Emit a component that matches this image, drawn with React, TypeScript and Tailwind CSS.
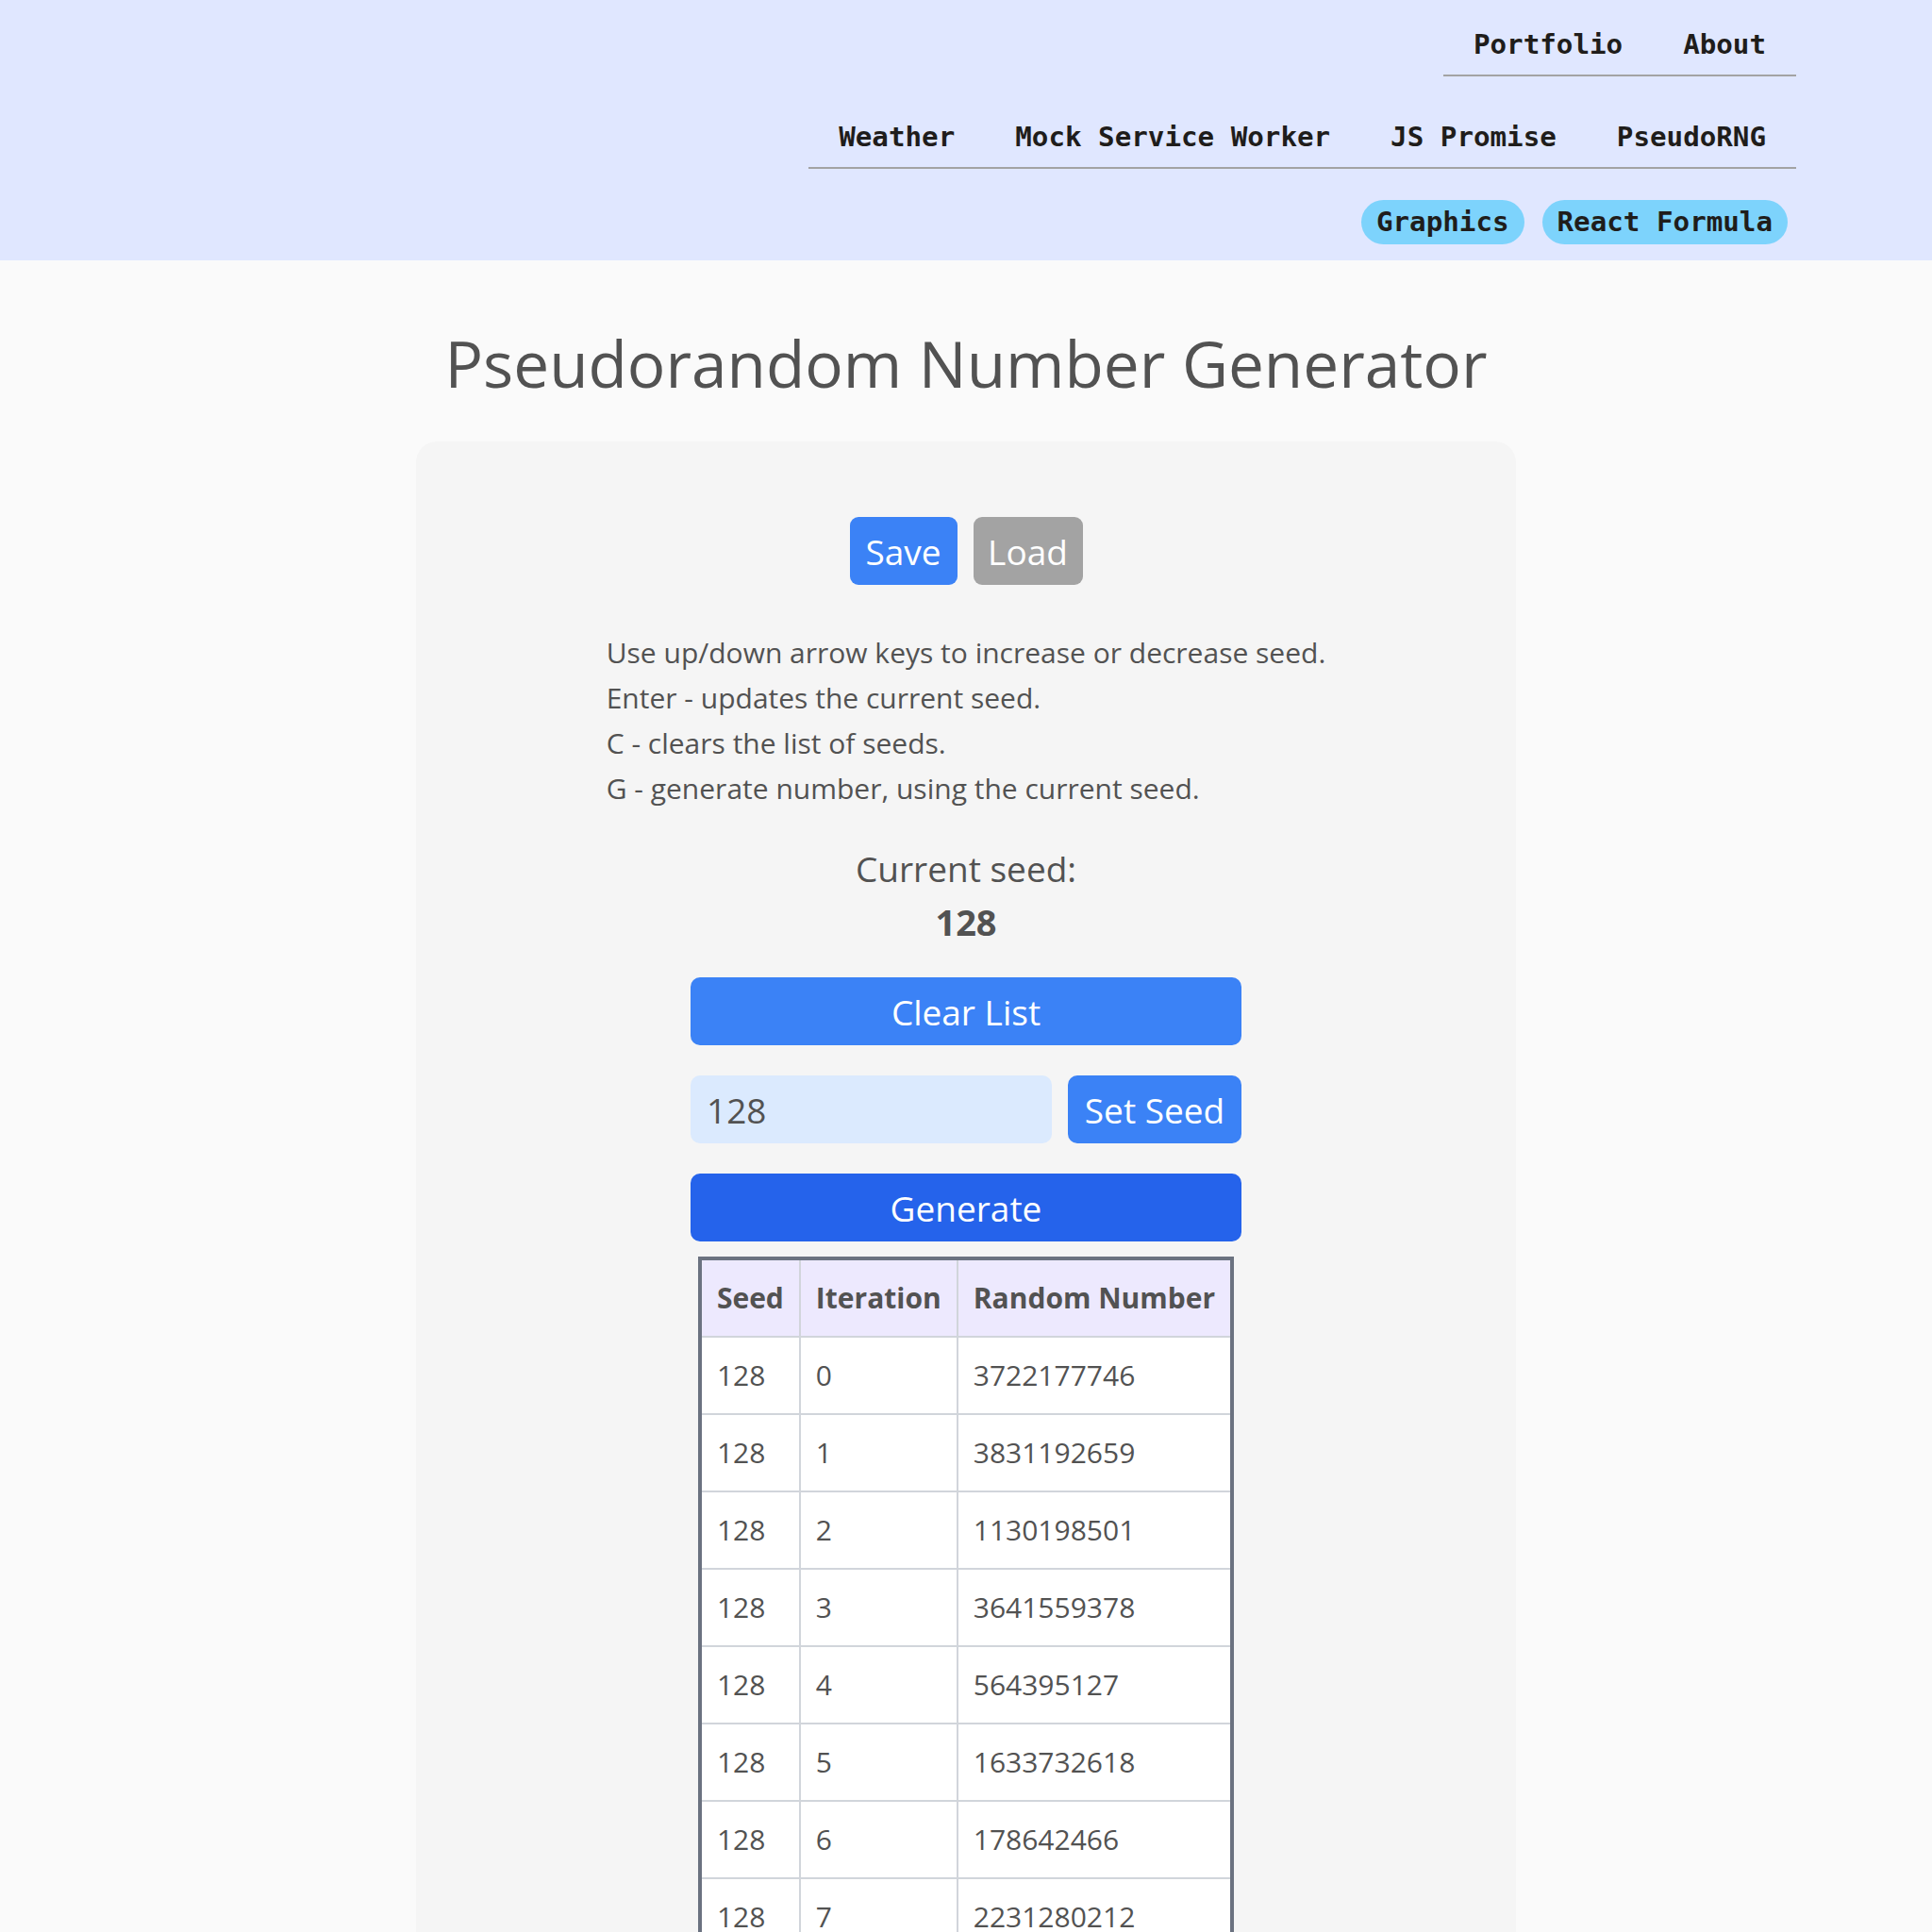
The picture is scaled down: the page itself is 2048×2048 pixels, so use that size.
import React from "react";

const rows: [number, number, string][] = [
  [128, 0, "3722177746"],
  [128, 1, "3831192659"],
  [128, 2, "1130198501"],
  [128, 3, "3641559378"],
  [128, 4, "564395127"],
  [128, 5, "1633732618"],
  [128, 6, "178642466"],
  [128, 7, "2231280212"],
];

const mono = { fontFamily: '"DejaVu Sans Mono", "Liberation Mono", monospace' };

function NavRow({ items, className }: { items: string[]; className?: string }) {
  return (
    <ul className={"flex border-b-2 border-[#a3a3a3] " + (className ?? "")}>
      {items.map((t) => (
        <li key={t}>
          <a className="block px-[32px] py-[10px] text-[29.2px] leading-[44px] font-bold text-[#1f1d1b]" style={mono}>
            {t}
          </a>
        </li>
      ))}
    </ul>
  );
}

export default function App() {
  return (
    <div
      className="min-h-screen bg-[#fafafa] text-[#525252]"
      style={{ fontFamily: '"Open Sans", "Noto Sans", sans-serif' }}
    >
      <header className="h-[276px] bg-[#e0e7ff] flex flex-col items-end pr-[144px]">
        <NavRow items={["Portfolio", "About"]} className="mt-[15px]" />
        <NavRow items={["Weather", "Mock Service Worker", "JS Promise", "PseudoRNG"]} className="mt-[32px]" />
        <div className="mt-[33px] mr-[9px] flex gap-[19px]">
          {["Graphics", "React Formula"].map((t) => (
            <a
              key={t}
              className="h-[47px] flex items-center px-[16px] rounded-full bg-[#7dd3fc] text-[29.2px] font-bold text-[#1f1d1b]"
              style={mono}
            >
              {t}
            </a>
          ))}
        </div>
      </header>

      <main className="flex flex-col items-center">
        <h1 className="mt-[64px] text-[67.5px] leading-[90px] font-normal text-[#525252]">
          Pseudorandom Number Generator
        </h1>

        <section className="mt-[38px] w-[1166px] rounded-[22px] bg-[#f5f5f5] pt-[80px] pb-[80px] flex flex-col items-center">
          <div className="flex gap-[17px]">
            <button className="w-[114px] h-[72px] rounded-[9px] bg-[#3b82f6] text-white text-[37px] leading-none">
              Save
            </button>
            <button className="w-[116px] h-[72px] rounded-[9px] bg-[#a3a3a3] text-white text-[37px] leading-none">
              Load
            </button>
          </div>

          <div className="mt-[48px] text-[30px] leading-[48px] text-left">
            <p>Use up/down arrow keys to increase or decrease seed.</p>
            <p>Enter - updates the current seed.</p>
            <p>C - clears the list of seeds.</p>
            <p>G - generate number, using the current seed.</p>
          </div>

          <div className="mt-[33px] flex flex-col items-center">
            <p className="text-[37px] leading-[56px]">Current seed:</p>
            <p className="text-[38px] leading-[56px] font-bold">128</p>
          </div>

          <div className="mt-[31px] w-[584px] flex flex-col gap-[32px]">
            <button className="h-[72px] rounded-[10px] bg-[#3b82f6] text-white text-[37px] leading-none">
              Clear List
            </button>
            <div className="flex gap-[17px]">
              <input
                readOnly
                value="128"
                className="w-[383px] h-[72px] rounded-[10px] bg-[#dbeafe] pl-[17px] text-[37px] text-[#525252] outline-none"
              />
              <button className="flex-1 h-[72px] rounded-[10px] bg-[#3b82f6] text-white text-[37px] leading-none">
                Set Seed
              </button>
            </div>
            <button className="h-[72px] rounded-[10px] bg-[#2563eb] text-white text-[37px] leading-none">
              Generate
            </button>
          </div>

          <table className="mt-[16px] border-collapse border-4 border-[#6b7280] text-[30px] leading-[46px] text-left">
            <thead>
              <tr className="bg-[#ede9fe]">
                {["Seed", "Iteration", "Random Number"].map((h) => (
                  <th key={h} className="border-2 border-[#d1d5db] px-[16px] py-[17px] font-bold">
                    {h}
                  </th>
                ))}
              </tr>
            </thead>
            <tbody className="bg-white">
              {rows.map(([s, i, n]) => (
                <tr key={i}>
                  <td className="border-2 border-[#d1d5db] px-[16px] py-[17px]">{s}</td>
                  <td className="border-2 border-[#d1d5db] px-[16px] py-[17px]">{i}</td>
                  <td className="border-2 border-[#d1d5db] px-[16px] py-[17px]">{n}</td>
                </tr>
              ))}
            </tbody>
          </table>
        </section>
      </main>
    </div>
  );
}
